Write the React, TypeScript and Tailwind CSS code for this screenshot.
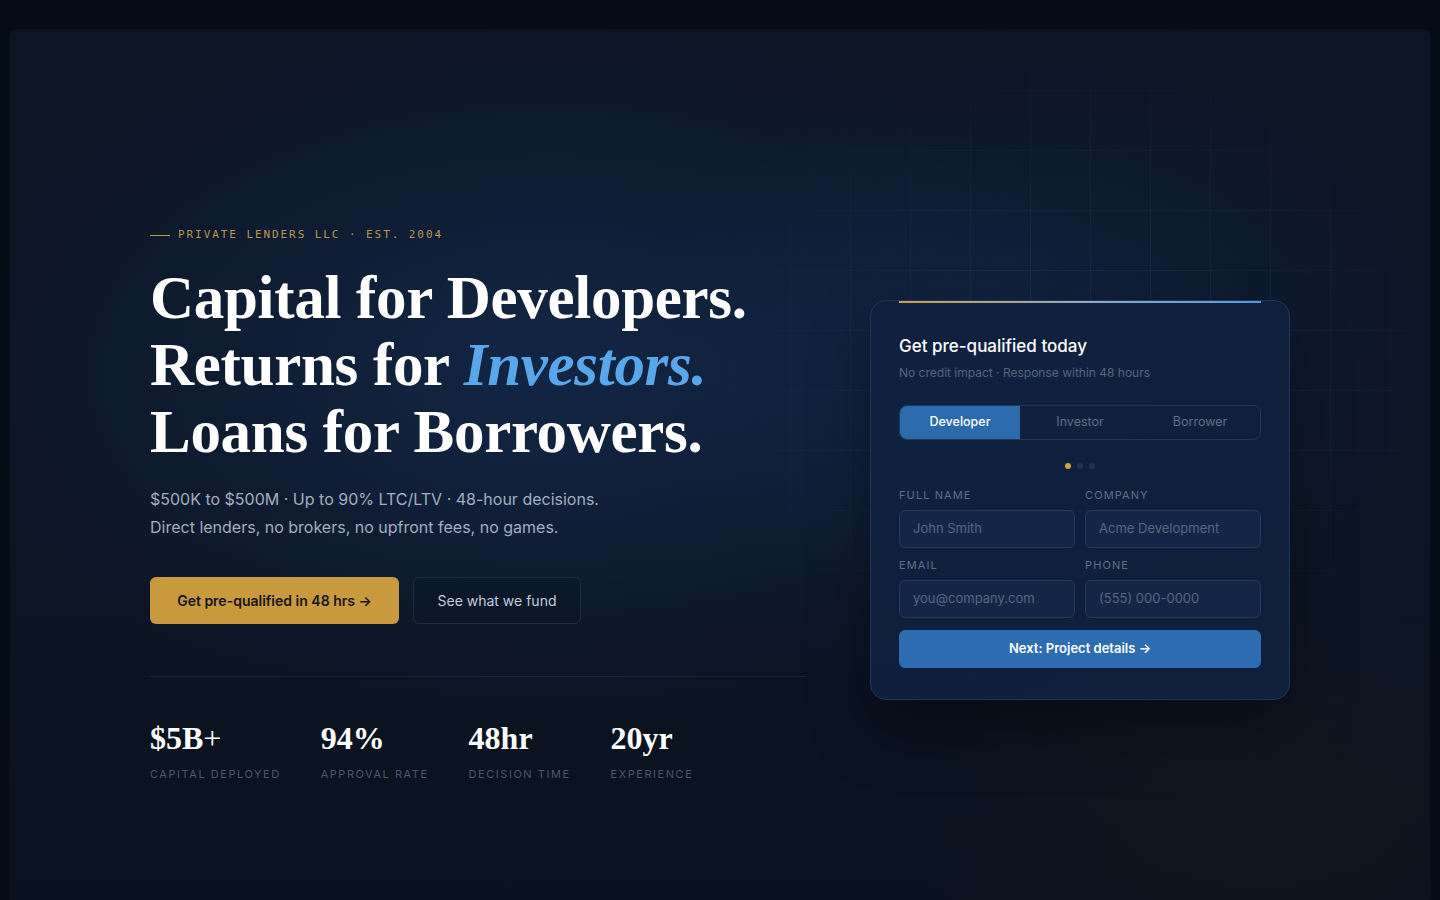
import React from "react";

const serif = "font-['Liberation_Serif','DejaVu_Serif',serif]";
const sans = "font-['Inter','Noto_Sans',sans-serif]";
const mono = "font-['DejaVu_Sans_Mono','Liberation_Mono',monospace]";

function Field({ label, placeholder }: { label: string; placeholder: string }) {
  return (
    <div className="flex flex-col">
      <div className="text-[11px] tracking-[0.1em] uppercase text-[#5f6f87] leading-[14px]">{label}</div>
      <div className="mt-[8px] h-[38px] rounded-[6px] border border-[#263b5c] bg-[#15284a]/80 px-[13px] flex items-center text-[13px] text-[#56677f]">
        {placeholder}
      </div>
    </div>
  );
}

function Stat({ value, label }: { value: React.ReactNode; label: string }) {
  return (
    <div className="flex flex-col">
      <div className={`${serif} font-bold text-[32px] leading-[40px] text-white`}>{value}</div>
      <div className="mt-[9px] text-[11px] tracking-[0.14em] uppercase text-[#4b576a] leading-[14px]">{label}</div>
    </div>
  );
}

export default function App() {
  return (
    <div className={`${sans} min-h-[900px] w-full bg-[#050b17] pt-[30px] px-[10px] overflow-hidden`}>
      <div className="relative h-[900px] rounded-t-[6px] overflow-hidden bg-[#0c1524] shadow-[0_0_0_1px_rgba(255,255,255,0.02)]">
        {/* background glows */}
        <div className="pointer-events-none absolute inset-0 bg-[radial-gradient(ellipse_60%_55%_at_38%_38%,rgba(22,52,96,0.55),transparent_70%)]" />
        <div className="pointer-events-none absolute inset-0 bg-[radial-gradient(ellipse_40%_45%_at_72%_35%,rgba(18,44,82,0.55),transparent_70%)]" />
        <div className="pointer-events-none absolute inset-0 bg-[radial-gradient(ellipse_35%_35%_at_88%_88%,rgba(40,34,28,0.35),transparent_70%)]" />
        <div className="pointer-events-none absolute inset-0 bg-[linear-gradient(to_bottom,transparent_55%,rgba(7,12,22,0.45))]" />
        {/* grid */}
        <div className="pointer-events-none absolute inset-0 bg-[linear-gradient(rgba(120,160,220,0.08)_1px,transparent_1px),linear-gradient(90deg,rgba(120,160,220,0.08)_1px,transparent_1px)] bg-[size:60px_60px] [mask-image:radial-gradient(ellipse_28%_40%_at_76%_38%,black_30%,transparent_100%)]" />

        <div className="relative mx-[140px] pt-[198px] grid grid-cols-[1fr_420px] gap-[64px] items-start">
          {/* left */}
          <div className="flex flex-col">
            <div className="flex items-center gap-[8px]">
              <div className="w-[20px] h-px bg-[#b8974c]" />
              <div className={`${mono} text-[11px] tracking-[0.175em] text-[#b8984f] leading-[14px]`}>
                PRIVATE LENDERS LLC · EST. 2004
              </div>
            </div>
            <h1 className={`${serif} mt-[22px] font-bold text-[61px] leading-[67px] text-white tracking-[-0.005em]`}>
              Capital for Developers.
              <br />
              Returns for <span className="italic text-[#5aa6ea]">Investors.</span>
              <br />
              Loans for Borrowers.
            </h1>
            <p className="mt-[20px] text-[16px] leading-[28px] text-[#a3aebf]">
              $500K to $500M · Up to 90% LTC/LTV · 48-hour decisions.
              <br />
              Direct lenders, no brokers, no upfront fees, no games.
            </p>
            <div className="mt-[36px] flex gap-[14px]">
              <button className="h-[47px] w-[249px] rounded-[6px] bg-[#c9993d] text-[14px] font-semibold text-[#15171c]">
                Get pre-qualified in 48 hrs →
              </button>
              <button className="h-[47px] w-[168px] rounded-[6px] border border-[#1f2d42] bg-[#0b1626]/40 text-[14px] text-[#c3ccd8]">
                See what we fund
              </button>
            </div>
            <div className="mt-[52px] h-px w-full bg-[#1a2638]" />
            <div className="mt-[41px] flex gap-[40px]">
              <Stat value={<>$5B<span className="font-normal">+</span></>} label="Capital Deployed" />
              <Stat value="94%" label="Approval Rate" />
              <Stat value="48hr" label="Decision Time" />
              <Stat value="20yr" label="Experience" />
            </div>
          </div>

          {/* card */}
          <div className="relative mt-[72px] rounded-[16px] border border-[#1f3554] bg-[#0f213e]/90 shadow-[0_30px_60px_rgba(0,0,0,0.35)] px-[28px] pt-[33px] pb-[31px]">
            <div className="absolute top-0 left-[28px] right-[28px] h-[2px] bg-[linear-gradient(90deg,#c9a04a,#8aa9c4_55%,#4f9be0)]" />
            <div className="text-[17px] font-medium text-white leading-[24px]">Get pre-qualified today</div>
            <div className="mt-[7px] text-[12px] text-[#56657c] leading-[16px]">No credit impact · Response within 48 hours</div>
            <div className="mt-[24px] grid grid-cols-3 h-[35px] rounded-[8px] border border-[#22385a] overflow-hidden text-[12.5px]">
              <div className="flex items-center justify-center bg-[#2c6aae] text-white font-medium">Developer</div>
              <div className="flex items-center justify-center text-[#5f6f86]">Investor</div>
              <div className="flex items-center justify-center text-[#5f6f86]">Borrower</div>
            </div>
            <div className="mt-[23px] flex justify-center gap-[6px]">
              <div className="w-[6px] h-[6px] rounded-full bg-[#d39e44]" />
              <div className="w-[6px] h-[6px] rounded-full bg-[#1f3352]" />
              <div className="w-[6px] h-[6px] rounded-full bg-[#1f3352]" />
            </div>
            <div className="mt-[19px] grid grid-cols-2 gap-x-[10px] gap-y-[10px]">
              <Field label="Full Name" placeholder="John Smith" />
              <Field label="Company" placeholder="Acme Development" />
              <Field label="Email" placeholder="you@company.com" />
              <Field label="Phone" placeholder="(555) 000-0000" />
            </div>
            <button className="mt-[12px] w-full h-[38px] rounded-[6px] bg-[#2d6cb1] text-[13px] font-semibold text-white">
              Next: Project details →
            </button>
          </div>
        </div>
      </div>
    </div>
  );
}
